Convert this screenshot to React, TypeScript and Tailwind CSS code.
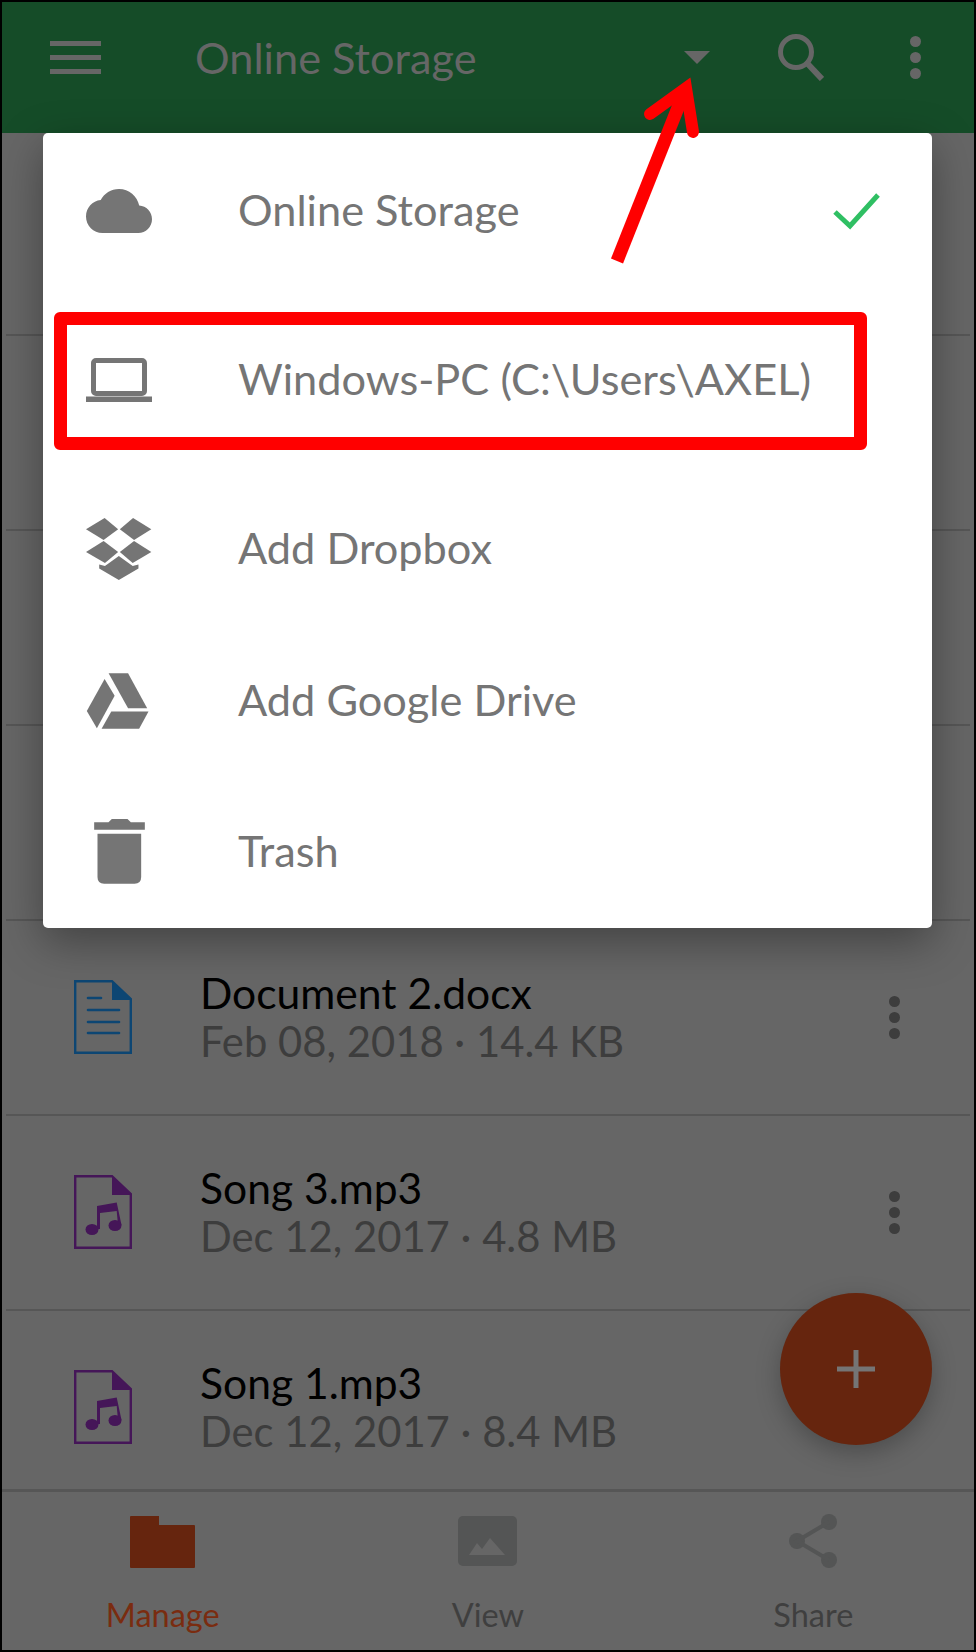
const DIM_ICON = '#666666'

function FileIcon({ kind }: { kind: 'doc' | 'music' }) {
  const color = kind === 'doc' ? '#0d4673' : '#451658'
  return (
    <svg viewBox="0 0 58 74" className="w-[58px] h-[74px] shrink-0">
      <path d="M1.200 1.200H38L56.800 19V72.800H1.200Z" fill="none" stroke={color} strokeWidth="2.400" />
      <path d="M38 1L57 20H38Z" fill={color} />
      {kind === 'doc' ? (
        <g stroke={color} strokeWidth="2.600" strokeLinecap="round">
          <path d="M14 18H27" />
          <path d="M14 30H45" />
          <path d="M14 42H45" />
          <path d="M14 53H45" />
        </g>
      ) : (
        <g fill={color}>
          <path d="M23 31L42.700 27.500L47.500 50H44L42.700 36L26 38V54H23Z" />
          <ellipse cx="18" cy="54.500" rx="6.500" ry="5.500" />
          <ellipse cx="41" cy="50.500" rx="6.500" ry="5.500" />
        </g>
      )}
    </svg>
  )
}

function FileRow({ kind, name, meta }: { kind: 'doc' | 'music'; name: string; meta: string }) {
  return (
    <div className="h-[195px] shrink-0 mx-[6px] border-b-2 border-[#565656] flex items-center pl-[68px] pr-[70px] pb-[2px]">
      <FileIcon kind={kind} />
      <div className="ml-[68px] flex-1">
        <div className="text-[42.6px] leading-[48px] text-black">{name}</div>
        <div className="text-[41.8px] leading-[48px] text-[#3d3d3d]">{meta}</div>
      </div>
      <div className="flex flex-col gap-[5px] pt-[2px]">
        <span className="w-[11px] h-[11px] rounded-full bg-[#3d3d3d]" />
        <span className="w-[11px] h-[11px] rounded-full bg-[#3d3d3d]" />
        <span className="w-[11px] h-[11px] rounded-full bg-[#3d3d3d]" />
      </div>
    </div>
  )
}

function BlankRow({ first }: { first?: boolean }) {
  return <div className={`${first ? 'h-[203px]' : 'h-[195px]'} shrink-0 mx-[6px] border-b-2 border-[#565656]`} />
}

function CloudIcon() {
  return (
    <svg viewBox="0 4 24 16" className="w-[66px] h-[44px]">
      <path d="M19.350 10.040C18.670 6.590 15.640 4 12 4 9.110 4 6.600 5.640 5.350 8.040 2.340 8.360 0 10.910 0 14c0 3.310 2.690 6 6 6h13c2.760 0 5-2.240 5-5 0-2.640-2.050-4.780-4.650-4.960z" fill="#757575" />
    </svg>
  )
}

function LaptopIcon() {
  return (
    <svg viewBox="0 0 66 44" className="w-[66px] h-[44px]">
      <rect x="7.500" y="2.500" width="51" height="33" rx="2.500" fill="none" stroke="#757575" strokeWidth="5" />
      <path d="M0 38.500H66V44H0Z" fill="#757575" />
    </svg>
  )
}

function DropboxIcon() {
  return (
    <svg viewBox="140 113 195 183" className="w-[66px] h-[62px]">
      <g fill="#757575">
        <path d="M195 113L235 146L192 178L140 146Z" />
        <path d="M279 113L333 146L282 178L240 146Z" />
        <path d="M192 181L235 213L196 246L140 213Z" />
        <path d="M282 181L333 213L278 246L240 213Z" />
        <path d="M237 225L278 255L295 250L295 262L237 296L179 262L179 250L196 255Z" />
      </g>
    </svg>
  )
}

function DriveIcon() {
  return (
    <svg viewBox="140 577 187 167" className="w-[63px] h-[56px]">
      <g fill="#757575">
        <path d="M207 578H265L322 682H265Z" />
        <path d="M195 595L225 645L172 742L142 690Z" />
        <path d="M215 692H326L298 743H186Z" />
      </g>
    </svg>
  )
}

function TrashIcon() {
  return (
    <svg viewBox="162 1018 152 195" className="ml-[8px] w-[51px] h-[65px]">
      <g fill="#757575">
        <path d="M162 1028H205L215 1018H262L272 1028H314V1050H162Z" />
        <path d="M172 1062H303V1192Q303 1212 283 1212H192Q172 1212 172 1192Z" />
      </g>
    </svg>
  )
}

const menuItems = [
  { label: 'Online Storage', icon: <CloudIcon />, height: 'h-[156px]', checked: true },
  { label: 'Windows-PC (C:\\Users\\AXEL)', icon: <LaptopIcon />, height: 'h-[182px]' },
  { label: 'Add Dropbox', icon: <DropboxIcon />, height: 'h-[156px]' },
  { label: 'Add Google Drive', icon: <DriveIcon />, height: 'h-[148px]' },
  { label: 'Trash', icon: <TrashIcon />, height: 'h-[153px]' },
]

export default function App() {
  return (
    <div className="relative w-[976px] h-[1652px] overflow-hidden bg-[#666666] flex flex-col font-['Lato',sans-serif]">
      <header className="h-[133px] shrink-0 bg-[#154c28] flex items-center pl-[50px] pr-[55px] pb-[18px]">
        <div className="w-[51px] flex flex-col gap-[9px]">
          <span className="h-[5px] bg-[#666666]" />
          <span className="h-[5px] bg-[#666666]" />
          <span className="h-[5px] bg-[#666666]" />
        </div>
        <div className="ml-[94px] flex-1 text-[43.3px] text-[#666666]">Online Storage</div>
        <svg viewBox="0 0 26 13" className="w-[26px] h-[13px]">
          <path d="M0 0H26L13 13Z" fill={DIM_ICON} />
        </svg>
        <svg viewBox="0 0 46 47" className="ml-[68px] w-[46px] h-[47px]">
          <circle cx="18" cy="18" r="15.500" fill="none" stroke={DIM_ICON} strokeWidth="5" />
          <path d="M27.500 27.500L44 45" stroke={DIM_ICON} strokeWidth="6" />
        </svg>
        <div className="ml-[86px] flex flex-col gap-[5px]">
          <span className="w-[11px] h-[11px] rounded-full bg-[#666666]" />
          <span className="w-[11px] h-[11px] rounded-full bg-[#666666]" />
          <span className="w-[11px] h-[11px] rounded-full bg-[#666666]" />
        </div>
      </header>

      <main className="flex-1 overflow-hidden flex flex-col">
        <BlankRow first />
        <BlankRow />
        <BlankRow />
        <BlankRow />
        <FileRow kind="doc" name="Document 2.docx" meta="Feb 08, 2018 · 14.4 KB" />
        <FileRow kind="music" name="Song 3.mp3" meta="Dec 12, 2017 · 4.8 MB" />
        <FileRow kind="music" name="Song 1.mp3" meta="Dec 12, 2017 · 8.4 MB" />
      </main>

      <nav className="h-[163px] shrink-0 bg-[#666666] border-t-[3px] border-[#565656] grid grid-cols-3 text-[32.5px]">
        <div className="flex flex-col items-center pt-[24px]">
          <svg viewBox="0 0 65 52" className="w-[65px] h-[52px]">
            <path d="M0 1Q0 0 1 0H29V9H64Q65 9 65 10V51Q65 52 64 52H1Q0 52 0 51Z" fill="#66250e" />
          </svg>
          <span className="mt-[23px] text-[#7a2c10]">Manage</span>
        </div>
        <div className="flex flex-col items-center pt-[24px]">
          <svg viewBox="0 0 59 50" className="w-[59px] h-[50px]">
            <rect width="59" height="50" rx="5" fill="#545555" />
            <path d="M11 39L19 27L24 33L32 22L47 39Z" fill="#666666" />
          </svg>
          <span className="mt-[25px] text-[#3f3f3f]">View</span>
        </div>
        <div className="flex flex-col items-center pt-[22px]">
          <svg viewBox="0 0 48 54" className="w-[48px] h-[54px]">
            <g fill="#545555">
              <circle cx="40" cy="8" r="8" />
              <circle cx="8" cy="27" r="8" />
              <circle cx="40" cy="46" r="8" />
            </g>
            <path d="M40 8L8 27L40 46" fill="none" stroke="#545555" strokeWidth="4" />
          </svg>
          <span className="mt-[23px] text-[#3f3f3f]">Share</span>
        </div>
      </nav>

      <div className="absolute left-[43px] top-[133px] w-[889px] bg-white rounded-[5px] shadow-[0_14px_44px_rgba(0,0,0,0.35)] text-[43.3px] text-[#757575]">
        {menuItems.map(item => (
          <div key={item.label} className={`${item.height} flex items-center pl-[43px]`}>
            <div className="w-[152px] flex">{item.icon}</div>
            <span className="flex-1 pb-[3px]">{item.label}</span>
            {item.checked && (
              <svg viewBox="0 0 47 37" className="w-[47px] h-[37px] mr-[52px]">
                <path d="M2 19L17 33L45 2" fill="none" stroke="#2fbf63" strokeWidth="5" />
              </svg>
            )}
          </div>
        ))}
      </div>

      {/* annotations */}
      <div className="absolute left-[54px] top-[312px] w-[813px] h-[138px] border-[13px] border-[#ff0000] rounded-[6px]" />
      <svg viewBox="600 60 110 210" className="absolute left-[600px] top-[60px] w-[110px] h-[210px]">
        <path d="M617 261L683 95" fill="none" stroke="#ff0000" strokeWidth="13" />
        <path d="M650 114L686 88L693 132" fill="none" stroke="#ff0000" strokeWidth="12" strokeLinecap="round" strokeLinejoin="miter" />
      </svg>

      <button className="absolute left-[780px] top-[1293px] w-[152px] h-[152px] rounded-full bg-[#66250e] shadow-[0_8px_24px_rgba(0,0,0,0.25)] flex items-center justify-center">
        <svg viewBox="0 0 38 38" className="w-[38px] h-[38px]">
          <path d="M16.500 0H21.500V16.500H38V21.500H21.500V38H16.500V21.500H0V16.500H16.500Z" fill="#757575" />
        </svg>
      </button>

      <div className="absolute inset-0 border-2 border-black pointer-events-none" />
    </div>
  )
}
